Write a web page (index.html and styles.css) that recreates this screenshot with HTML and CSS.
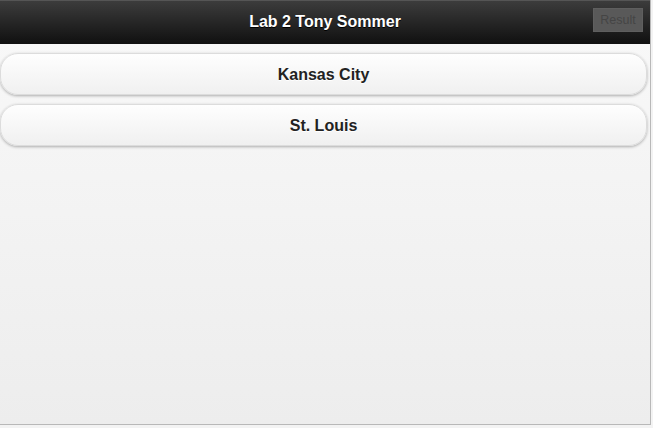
FILE: index.html
```html
<!DOCTYPE html>
<html>
<head>
<meta charset="utf-8">
<link rel="stylesheet" href="styles.css">
</head>
<body>
<div class="page">
  <div class="header">
    <h1 class="title">Lab 2 Tony Sommer</h1>
    <span class="result">Result</span>
  </div>
  <div class="content">
    <div class="btn">Kansas City</div>
    <div class="btn">St. Louis</div>
  </div>
</div>
</body>
</html>
```
FILE: styles.css
```css
html, body {
  margin: 0;
  padding: 0;
  background: #f3f3f3;
  font-family: "Liberation Sans", Arial, sans-serif;
}
.page {
  width: 650px;
  height: 424px;
  border-right: 1px solid #b8b8b8;
  border-bottom: 1px solid #b8b8b8;
  background: linear-gradient(#f9f9f9, #ededed);
  overflow: hidden;
}
.header {
  position: relative;
  height: 44px;
  box-sizing: border-box;
  border-top: 1px solid #555;
  border-bottom: 1px solid #111;
  background: linear-gradient(#3c3c3c, #111111);
  display: flex;
  align-items: center;
  justify-content: center;
}
.title {
  margin: 0;
  color: #fff;
  font-size: 16px;
  font-weight: bold;
  text-shadow: 0 1px 0 #000;
  padding-bottom: 1px;
}
.result {
  position: absolute;
  left: 593px;
  top: 7px;
  width: 50px;
  height: 24px;
  box-sizing: border-box;
  background: #595959;
  border: 1px solid #5f5f5f;
  color: #454545;
  font-size: 12.5px;
  line-height: 22px;
  text-align: center;
}
.content {
  padding: 9px 3px 0 0;
  display: flex;
  flex-direction: column;
  gap: 9px;
}
.btn {
  height: 42px;
  box-sizing: border-box;
  border: 1px solid #dcdcdc;
  border-radius: 18px;
  background: linear-gradient(#fefefe, #f0f0f0);
  box-shadow: 0 1px 3px rgba(0,0,0,0.3);
  display: flex;
  align-items: center;
  justify-content: center;
  padding-top: 2px;
  color: #222;
  font-size: 16px;
  font-weight: bold;
  text-shadow: 0 1px 0 #fff;
}
```
